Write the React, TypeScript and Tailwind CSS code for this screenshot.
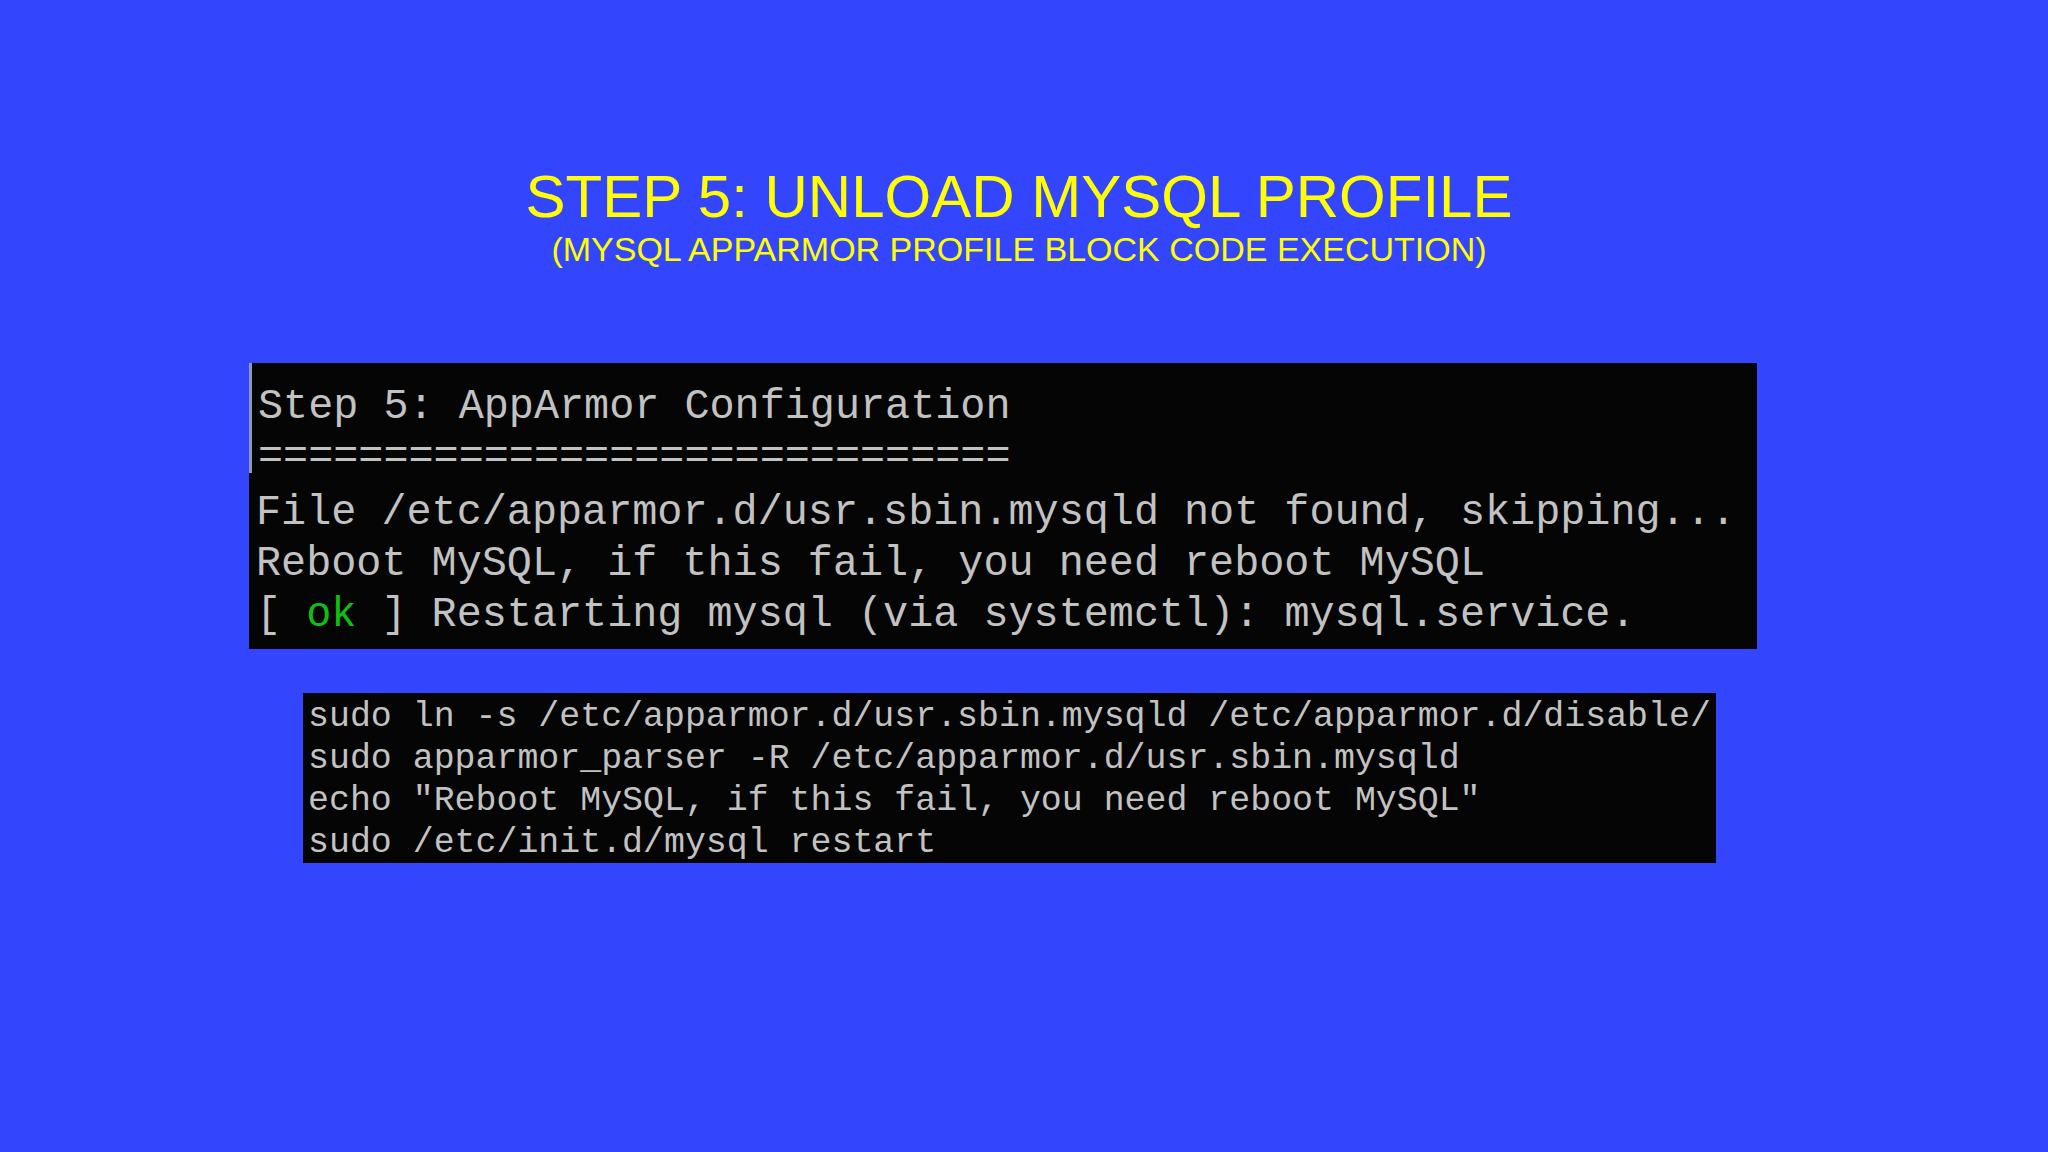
import React from "react";

const mono = { fontFamily: '"Liberation Mono", "Courier New", monospace' };

export default function App() {
  return (
    <div className="w-[2048px] h-[1152px] bg-[#3346fe] flex flex-col overflow-hidden">
      <div
        className="w-full flex flex-col items-center pr-[10px] pt-[167px] text-[#ffff00]"
        style={{ fontFamily: '"Liberation Sans", Arial, sans-serif' }}
      >
        <div className="text-[60px] leading-none">STEP 5: UNLOAD MYSQL PROFILE</div>
        <div className="text-[34px] leading-none mt-[5px]">(MYSQL APPARMOR PROFILE BLOCK CODE EXECUTION)</div>
      </div>

      <div
        className="ml-[249px] mt-[97px] w-[1508px] h-[286px] bg-[#050505] text-[#c2c2c2] text-[41.8px] whitespace-pre flex flex-col"
        style={mono}
      >
        <div className="h-[110px] border-l-[3px] border-[#8b98b8] pl-[6px] pt-[19px] leading-[50px]">
          <div>Step 5: AppArmor Configuration</div>
          <div>==============================</div>
        </div>
        <div className="mt-[15px] pl-[7px] leading-[51px]">
          <div>File /etc/apparmor.d/usr.sbin.mysqld not found, skipping...</div>
          <div>Reboot MySQL, if this fail, you need reboot MySQL</div>
          <div>
            [ <span className="text-[#10c010]">ok</span> ] Restarting mysql (via systemctl): mysql.service.
          </div>
        </div>
      </div>

      <div
        className="ml-[303px] mt-[44px] w-[1413px] h-[170px] bg-[#050505] text-[#c2c2c2] text-[34.9px] leading-[42px] whitespace-pre pl-[5px] pt-[3px]"
        style={mono}
      >
        <div>sudo ln -s /etc/apparmor.d/usr.sbin.mysqld /etc/apparmor.d/disable/</div>
        <div>sudo apparmor_parser -R /etc/apparmor.d/usr.sbin.mysqld</div>
        <div>echo "Reboot MySQL, if this fail, you need reboot MySQL"</div>
        <div>sudo /etc/init.d/mysql restart</div>
      </div>
    </div>
  );
}
